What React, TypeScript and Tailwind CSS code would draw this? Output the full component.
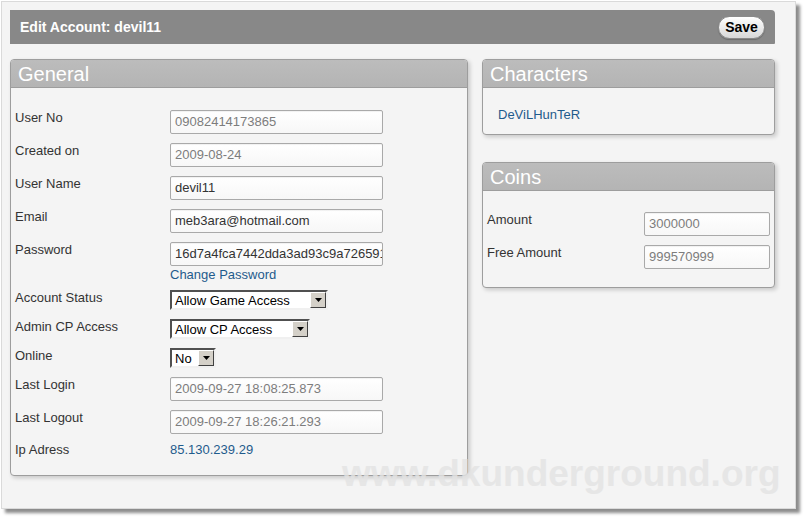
import React from "react";

const font = { fontFamily: '"Liberation Sans", Arial, sans-serif' };

function TextInput({ value, dark, w = "w-[213px]" }: { value: string; dark?: boolean; w?: string }) {
  return (
    <div
      className={`${w} h-[24px] shrink-0 border border-[#a9a9a9] rounded-[2px] bg-gradient-to-b from-white to-[#f7f7f7] shadow-[inset_0_1px_1px_rgba(0,0,0,0.06)] px-[4px] flex items-center overflow-hidden whitespace-nowrap text-[13px] ${dark ? "text-[#333]" : "text-[#7d7d7d]"}`}
    >
      {value}
    </div>
  );
}

function Select({ value, w }: { value: string; w: string }) {
  return (
    <div className={`${w} h-[20px] shrink-0 border-2 border-t-[#505050] border-l-[#505050] border-b-[#f0f0f0] border-r-[#f0f0f0] bg-white flex items-center justify-between`}>
      <span className="pl-[3px] text-[13px] text-black leading-none">{value}</span>
      <span className="w-[16px] h-[16px] bg-[#d4d0c8] border border-t-white border-l-white border-b-[#404040] border-r-[#404040] flex items-center justify-center">
        <svg width="7" height="4" viewBox="0 0 7 4">
          <polygon points="0,0 7,0 3.5,4" fill="#000" />
        </svg>
      </span>
    </div>
  );
}

function Label({ children, w = "w-[155px]" }: { children: React.ReactNode; w?: string }) {
  return <div className={`${w} shrink-0 text-[13px] leading-[15px] text-[#333]`}>{children}</div>;
}

function Panel({ title, children, className = "" }: { title: string; children: React.ReactNode; className?: string }) {
  return (
    <div className={`border border-[#9d9d9d] rounded-[4px] bg-[#f4f4f4] shadow-[2px_2px_4px_rgba(0,0,0,0.18)] overflow-hidden ${className}`}>
      <div className="h-[28px] bg-gradient-to-b from-[#bcbcbc] to-[#b4b4b4] border-b border-[#9d9d9d] px-[7px] flex items-center text-white text-[20px] leading-none">
        {title}
      </div>
      {children}
    </div>
  );
}

export default function App() {
  return (
    <div className="w-[809px] h-[521px] bg-white relative overflow-hidden" style={font}>
      <div className="ml-[1px] mt-[1px] w-[795px] h-[508px] bg-[#f4f4f4] border border-[#dadada] shadow-[4px_4px_3px_rgba(0,0,0,0.45)] pt-[8px] pl-[8px]">
        {/* header */}
        <div className="w-[765px] h-[34px] bg-[#888888] rounded-tr-[4px] rounded-br-[1px] flex items-center justify-between pl-[10px] pr-[10px]">
          <span className="text-white font-bold text-[14px]">Edit Account: devil11</span>
          <button className="h-[23px] w-[47px] rounded-full border border-[#8a8a8a] bg-gradient-to-b from-white to-[#d8d8d8] text-black font-bold text-[14px] leading-none flex items-center justify-center shadow-[0_1px_1px_rgba(0,0,0,0.2)]">
            Save
          </button>
        </div>

        <div className="flex gap-[14px] mt-[15px]">
          {/* General */}
          <Panel title="General" className="w-[458px] h-[417px]">
            <div className="pl-[4px] pt-[22px] flex flex-col">
              <div className="flex mb-[9px]">
                <Label>User No</Label>
                <TextInput value="09082414173865" />
              </div>
              <div className="flex mb-[9px]">
                <Label>Created on</Label>
                <TextInput value="2009-08-24" />
              </div>
              <div className="flex mb-[9px]">
                <Label>User Name</Label>
                <TextInput value="devil11" dark />
              </div>
              <div className="flex mb-[9px]">
                <Label>Email</Label>
                <TextInput value="meb3ara@hotmail.com" dark />
              </div>
              <div className="flex">
                <Label>Password</Label>
                <TextInput value="16d7a4fca7442dda3ad93c9a72659138" dark />
              </div>
              <div className="flex mt-[1px] mb-[8px]">
                <div className="w-[155px] shrink-0" />
                <a className="text-[13px] leading-[15px] text-[#1f5b8c]">Change Password</a>
              </div>
              <div className="flex mb-[9px]">
                <Label>Account Status</Label>
                <Select value="Allow Game Access" w="w-[158px]" />
              </div>
              <div className="flex mb-[9px]">
                <Label>Admin CP Access</Label>
                <Select value="Allow CP Access" w="w-[140px]" />
              </div>
              <div className="flex mb-[9px]">
                <Label>Online</Label>
                <Select value="No" w="w-[46px]" />
              </div>
              <div className="flex mb-[9px]">
                <Label>Last Login</Label>
                <TextInput value="2009-09-27 18:08:25.873" />
              </div>
              <div className="flex mb-[8px]">
                <Label>Last Logout</Label>
                <TextInput value="2009-09-27 18:26:21.293" />
              </div>
              <div className="flex">
                <Label>Ip Adress</Label>
                <a className="text-[13px] leading-[15px] text-[#1f5b8c]">85.130.239.29</a>
              </div>
            </div>
          </Panel>

          {/* right column */}
          <div className="flex flex-col w-[293px]">
            <Panel title="Characters" className="h-[76px]">
              <div className="pl-[15px] pt-[14px]">
                <a className="text-[13px] leading-[15px] text-[#1f5b8c]">DeViLHunTeR</a>
              </div>
            </Panel>
            <Panel title="Coins" className="h-[126px] mt-[27px]">
              <div className="pl-[4px] pt-[21px] flex flex-col">
                <div className="flex mb-[9px]">
                  <Label w="w-[157px]">Amount</Label>
                  <TextInput value="3000000" w="w-[126px]" />
                </div>
                <div className="flex">
                  <Label w="w-[157px]">Free Amount</Label>
                  <TextInput value="999570999" w="w-[126px]" />
                </div>
              </div>
            </Panel>
          </div>
        </div>
      </div>

      {/* watermark */}
      <div className="absolute left-[342px] top-[455px] text-[37px] font-bold leading-none text-[#e3e3e3] opacity-80 pointer-events-none select-none">
        www.dkunderground.org
      </div>
    </div>
  );
}
